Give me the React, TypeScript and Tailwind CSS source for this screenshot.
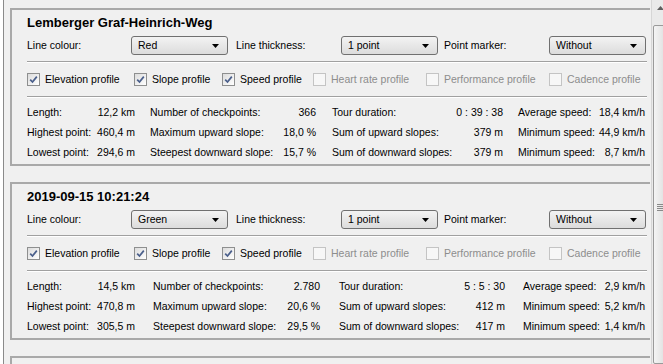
import React from "react";

type Stat = [string, string];

type Track = {
  title: string;
  colour: string;
  cols: { w: string; ml: string; rows: Stat[] }[];
};

const tracks: Track[] = [
  {
    title: "Lemberger Graf-Heinrich-Weg",
    colour: "Red",
    cols: [
      {
        w: "w-[108px]",
        ml: "ml-0",
        rows: [
          ["Length:", "12,2 km"],
          ["Highest point:", "460,4 m"],
          ["Lowest point:", "294,6 m"],
        ],
      },
      {
        w: "w-[166px]",
        ml: "ml-[15px]",
        rows: [
          ["Number of checkpoints:", "366"],
          ["Maximum upward slope:", "18,0 %"],
          ["Steepest downward slope:", "15,7 %"],
        ],
      },
      {
        w: "w-[171px]",
        ml: "ml-[16px]",
        rows: [
          ["Tour duration:", "0 : 39 : 38"],
          ["Sum of upward slopes:", "379 m"],
          ["Sum of downward slopes:", "379 m"],
        ],
      },
      {
        w: "w-[127px]",
        ml: "ml-[15px]",
        rows: [
          ["Average speed:", "18,4 km/h"],
          ["Minimum speed:", "44,9 km/h"],
          ["Minimum speed:", "8,7 km/h"],
        ],
      },
    ],
  },
  {
    title: "2019-09-15 10:21:24",
    colour: "Green",
    cols: [
      {
        w: "w-[108px]",
        ml: "ml-0",
        rows: [
          ["Length:", "14,5 km"],
          ["Highest point:", "470,8 m"],
          ["Lowest point:", "305,5 m"],
        ],
      },
      {
        w: "w-[167px]",
        ml: "ml-[18px]",
        rows: [
          ["Number of checkpoints:", "2.780"],
          ["Maximum upward slope:", "20,6 %"],
          ["Steepest downward slope:", "29,5 %"],
        ],
      },
      {
        w: "w-[166px]",
        ml: "ml-[19px]",
        rows: [
          ["Tour duration:", "5 : 5 : 30"],
          ["Sum of upward slopes:", "412 m"],
          ["Sum of downward slopes:", "417 m"],
        ],
      },
      {
        w: "w-[122px]",
        ml: "ml-[18px]",
        rows: [
          ["Average speed:", "2,9 km/h"],
          ["Minimum speed:", "5,2 km/h"],
          ["Minimum speed:", "1,4 km/h"],
        ],
      },
    ],
  },
];

const profiles = [
  { label: "Elevation profile", on: true, w: "w-[107px]" },
  { label: "Slope profile", on: true, w: "w-[88px]" },
  { label: "Speed profile", on: true, w: "w-[91px]" },
  { label: "Heart rate profile", on: false, w: "w-[113px]" },
  { label: "Performance profile", on: false, w: "w-[123px]" },
  { label: "Cadence profile", on: false, w: "w-[90px]" },
];

function Select({ value, w }: { value: string; w: string }) {
  return (
    <div
      className={`${w} h-[19px] flex items-center justify-between rounded-[3px] border border-[#707070] bg-gradient-to-b from-[#f3f3f3] to-[#dcdcdc] pl-[6px] pr-[8px]`}
    >
      <span>{value}</span>
      <svg width="7" height="4" viewBox="0 0 7 4">
        <path d="M0 0 H7 L3.5 4 Z" fill="#000" />
      </svg>
    </div>
  );
}

function Check({ on }: { on: boolean }) {
  if (!on) {
    return (
      <div className="w-[13px] h-[13px] border border-[#c4c4c4] bg-[#f7f7f7] shrink-0" />
    );
  }
  return (
    <div className="w-[13px] h-[13px] border border-[#8e8f8f] bg-gradient-to-br from-[#dcdcdc] to-white shrink-0 flex items-center justify-center">
      <svg width="9" height="9" viewBox="0 0 9 9">
        <path
          d="M1.2 4.6 L3.5 7 L7.8 1.6"
          fill="none"
          stroke="#4a5f8b"
          strokeWidth="1.7"
        />
      </svg>
    </div>
  );
}

function Separator() {
  return (
    <div className="mr-[3px]">
      <div className="h-px bg-[#a0a0a0]" />
      <div className="h-px bg-white" />
    </div>
  );
}

function TrackPanel({ track }: { track: Track }) {
  return (
    <div className="border-t-2 border-l-2 border-b-2 border-[#a9a9a9] pl-[15px] pb-[2px]">
      <div className="h-[24px] flex items-center text-[13px] font-bold">
        {track.title}
      </div>
      <div className="mt-[2px] h-[19px] flex items-center">
        <div className="w-[104px]">Line colour:</div>
        <Select value={track.colour} w="w-[97px]" />
        <div className="ml-[8px] w-[105px]">Line thickness:</div>
        <Select value="1 point" w="w-[97px]" />
        <div className="ml-[6px] w-[105px]">Point marker:</div>
        <Select value="Without" w="w-[97px]" />
      </div>
      <div className="mt-[6px]">
        <Separator />
      </div>
      <div className="h-[33px] flex items-center">
        {profiles.map((p) => (
          <div key={p.label} className={`${p.w} shrink-0 flex items-center gap-[5px]`}>
            <Check on={p.on} />
            <span className={p.on ? "text-black" : "text-[#8d8d8d]"}>
              {p.label}
            </span>
          </div>
        ))}
      </div>
      <Separator />
      <div className="pt-[4px] flex">
        {track.cols.map((c, i) => (
          <div key={i} className={`${c.w} ${c.ml} shrink-0`}>
            {c.rows.map(([k, v], j) => (
              <div key={j} className="h-[20px] flex items-center justify-between gap-[3px]">
                <span>{k}</span>
                <span>{v}</span>
              </div>
            ))}
          </div>
        ))}
      </div>
    </div>
  );
}

export default function App() {
  return (
    <div className="w-[663px] h-[364px] overflow-hidden flex bg-[#f0f0f0] text-[10.5px] whitespace-nowrap text-black font-['Liberation_Sans',Arial,sans-serif] leading-none">
      <div className="w-[3px] bg-white shrink-0" />
      <div className="w-px bg-[#8a8a8a] shrink-0" />
      <div className="w-[647px] shrink-0 overflow-hidden pt-[8px] pl-[6px] pr-[1px] bg-[#f0f0f0]">
        <div className="flex flex-col gap-[16px]">
          {tracks.map((t) => (
            <TrackPanel key={t.title} track={t} />
          ))}
          <div className="h-[40px] border-t-2 border-l-2 border-[#a9a9a9]" />
        </div>
      </div>
      {/* scrollbar */}
      <div className="w-[17px] shrink-0 flex flex-col border-l border-[#d6d6d6] bg-[#eaeaea]">
        <div className="h-[17px] flex items-center justify-center">
          <svg width="7" height="4" viewBox="0 0 7 4">
            <path d="M0 4 H7 L3.5 0 Z" fill="#606060" />
          </svg>
        </div>
        <div className="mt-[9px] ml-[1px] h-[370px] rounded-[2px] border border-[#9a9a9a] bg-gradient-to-r from-[#f4f4f4] to-[#dcdcdc] flex flex-col items-center">
          <div className="mt-[178px] w-[7px] flex flex-col gap-[1px]">
            <div className="h-px bg-[#8a8a8a]" />
            <div className="h-px bg-[#8a8a8a]" />
            <div className="h-px bg-[#8a8a8a]" />
            <div className="h-px bg-[#8a8a8a]" />
          </div>
        </div>
      </div>
    </div>
  );
}
